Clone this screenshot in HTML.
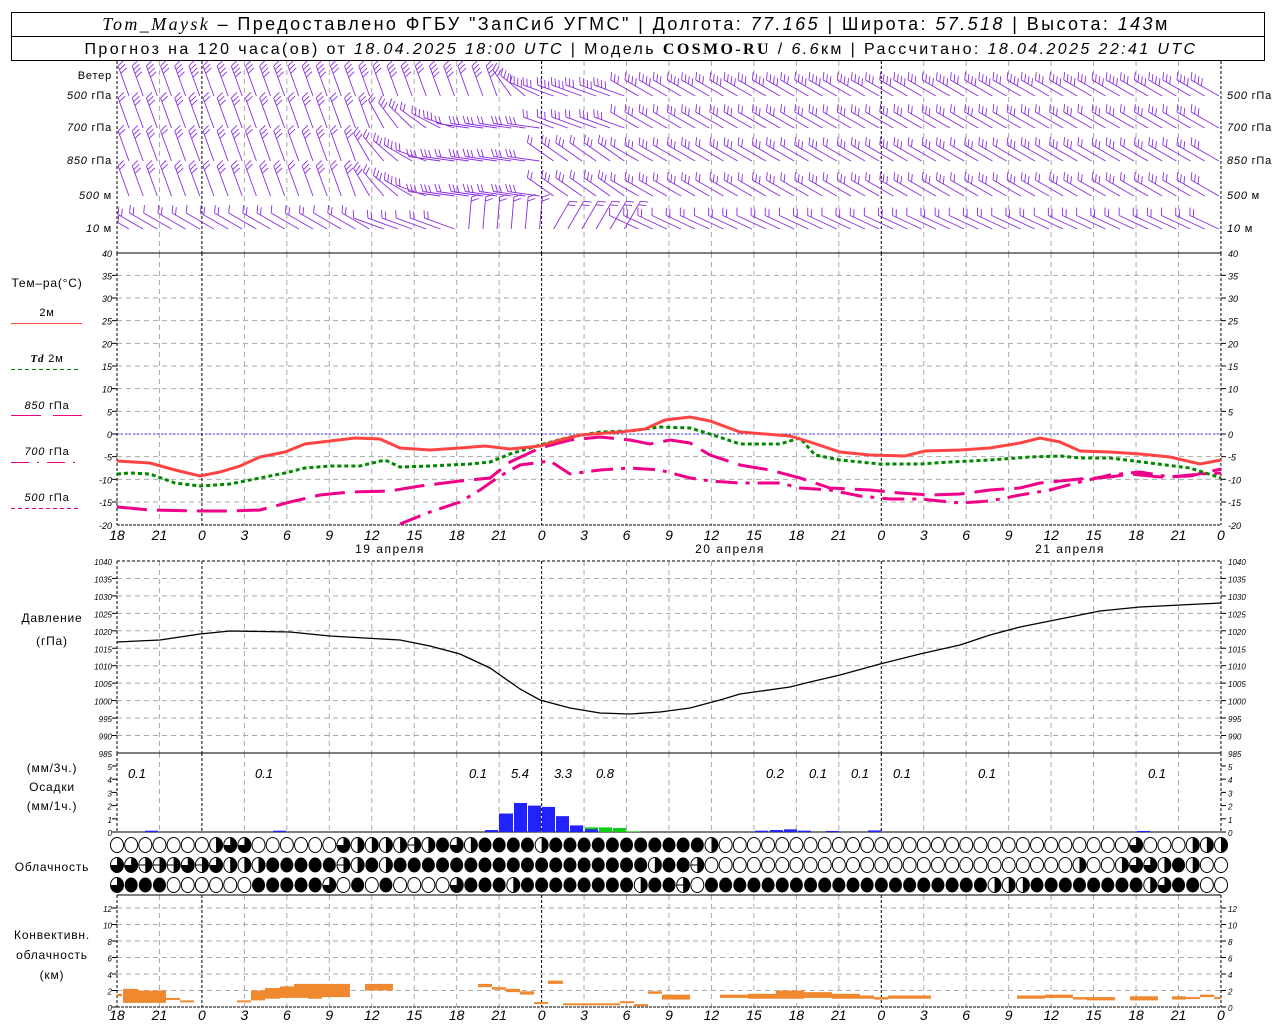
<!DOCTYPE html>
<html><head><meta charset="utf-8"><style>
body{margin:0;background:#fff;width:1280px;height:1024px;overflow:hidden}
svg{position:absolute;left:0;top:0}
text{font-family:"Liberation Sans",sans-serif;fill:#000}
.it{font-style:italic}
.lb{letter-spacing:0.8px}
</style></head><body>
<svg id="s" width="1280" height="1024" xmlns="http://www.w3.org/2000/svg">
<rect x="11.5" y="12.5" width="1253" height="48" fill="none" stroke="#000"/>
<line x1="11" y1="36.5" x2="1265" y2="36.5" stroke="#000"/>
<text x="636" y="30" font-size="18" text-anchor="middle" letter-spacing="2.4"><tspan font-family="Liberation Serif" font-style="italic">Tom_Maysk</tspan> – Предоставлено ФГБУ "ЗапСиб УГМС" | Долгота: <tspan font-style="italic">77.165</tspan> | Широта: <tspan font-style="italic">57.518</tspan> | Высота: <tspan font-style="italic">143</tspan>м</text>
<text x="641" y="54" font-size="16" text-anchor="middle" letter-spacing="2.4">Прогноз на 120 часа(ов) от <tspan font-style="italic">18.04.2025 18:00 UTC</tspan>  | Модель <tspan font-family="Liberation Serif" font-weight="bold">COSMO-RU</tspan> / <tspan font-style="italic">6.6</tspan>км | Рассчитано: <tspan font-style="italic">18.04.2025 22:41 UTC</tspan></text>
<g font-size="11" class="lb">
<text x="112" y="79" text-anchor="end">Ветер</text>
<text x="112" y="99" text-anchor="end"><tspan class="it">500</tspan> гПа</text>
<text x="112" y="131" text-anchor="end"><tspan class="it">700</tspan> гПа</text>
<text x="112" y="164" text-anchor="end"><tspan class="it">850</tspan> гПа</text>
<text x="112" y="199" text-anchor="end"><tspan class="it">500</tspan>  м</text>
<text x="112" y="232" text-anchor="end"><tspan class="it">10</tspan>   м</text>
<text x="1227" y="99"><tspan class="it">500</tspan> гПа</text>
<text x="1227" y="131"><tspan class="it">700</tspan> гПа</text>
<text x="1227" y="164"><tspan class="it">850</tspan> гПа</text>
<text x="1227" y="199"><tspan class="it">500</tspan>  м</text>
<text x="1227" y="232"><tspan class="it">10</tspan>   м</text>
<text x="47" y="287" text-anchor="middle" font-size="12">Тем–ра(°C)</text>
<text x="47" y="316" text-anchor="middle">2м</text>
<line x1="11" y1="323.5" x2="82" y2="323.5" stroke="#f44"/>
<text x="47" y="362" text-anchor="middle"><tspan font-family="Liberation Serif" font-style="italic" font-weight="bold">Td</tspan>  2м</text>
<line x1="11" y1="369.5" x2="80" y2="369.5" stroke="#080" stroke-dasharray="4,3"/>
<text x="47" y="409" text-anchor="middle"><tspan class="it">850</tspan> гПа</text>
<line x1="11" y1="415.5" x2="82" y2="415.5" stroke="#e08" stroke-dasharray="30,12"/>
<text x="47" y="455" text-anchor="middle"><tspan class="it">700</tspan> гПа</text>
<line x1="11" y1="462.5" x2="82" y2="462.5" stroke="#e08" stroke-dasharray="18,8,2,8"/>
<text x="47" y="501" text-anchor="middle"><tspan class="it">500</tspan> гПа</text>
<line x1="11" y1="508.5" x2="80" y2="508.5" stroke="#e08" stroke-dasharray="4,3"/>
<text x="52" y="622" text-anchor="middle" font-size="12">Давление</text>
<text x="52" y="645" text-anchor="middle" font-size="12">(гПа)</text>
<text x="52" y="772" text-anchor="middle" font-size="12">(мм/3ч.)</text>
<text x="52" y="791" text-anchor="middle" font-size="12">Осадки</text>
<text x="52" y="810" text-anchor="middle" font-size="12">(мм/1ч.)</text>
<text x="52" y="871" text-anchor="middle" font-size="12">Облачность</text>
<text x="52" y="939" text-anchor="middle" font-size="12">Конвективн.</text>
<text x="52" y="959" text-anchor="middle" font-size="12">облачность</text>
<text x="52" y="979" text-anchor="middle" font-size="12">(км)</text>
<text x="390" y="553" text-anchor="middle" font-size="12" letter-spacing="1.5">19 апреля</text>
<text x="730" y="553" text-anchor="middle" font-size="12" letter-spacing="1.5">20 апреля</text>
<text x="1070" y="553" text-anchor="middle" font-size="12" letter-spacing="1.5">21 апреля</text>
</g>
<g id="g"></g>
</svg>
<script>
var g=document.getElementById('g'),h='';
function L(a,b,c,d,st,ex){h+='<line x1="'+a+'" y1="'+b+'" x2="'+c+'" y2="'+d+'" stroke="'+st+'" '+(ex||'')+'/>';}
function T(x,y,s,a,fs,cl){h+='<text x="'+x+'" y="'+y+'" font-size="'+(fs||10)+'" text-anchor="'+(a||'start')+'" font-style="italic"'+(cl?' fill="'+cl+'"':'')+'>'+s+'</text>';}
function P(pts,st,w,da){h+='<polyline fill="none" stroke="'+st+'" stroke-width="'+w+'" '+(da?'stroke-dasharray="'+da+'"':'')+' points="'+pts+'"/>';}
var X0=117,X1=1221,px=14.154;
var panels=[[61,253],[253,525],[561,753],[753,832],[895,1007]];
for(var v=35;v>=-15;v-=5){var y=434-v*4.533;L(X0,y,X1,y,'#aaa','stroke-dasharray="5,4"');L(112,y,117,y,'#000');L(1221,y,1226,y,'#000');T(112,y+4,v,'end',9);T(1228,y+4,v,'start',9);}
T(112,257,40,'end',9);T(1228,257,40,'start',9);T(112,529,-20,'end',9);T(1228,529,-20,'start',9);
L(X0,434,X1,434,'#33f','stroke-dasharray="2,2"');
for(var p=1035;p>=990;p-=5){var y=561+(1040-p)*3.49;L(X0,y,X1,y,'#aaa','stroke-dasharray="5,4"');L(112,y,117,y,'#000');L(1221,y,1226,y,'#000');T(112,y+4,p,'end',8);T(1228,y+4,p,'start',8);}
T(112,565,1040,'end',8);T(1228,565,1040,'start',8);T(112,757,985,'end',8);T(1228,757,985,'start',8);
for(var k=0;k<=5;k++){var y=832-k*13.2;L(112,y,117,y,'#000');L(1221,y,1226,y,'#000');T(112,y+4,k,'end',8);T(1228,y+4,k,'start',8);}
for(var k=0;k<=12;k+=2){var y=1007-k*8.25;if(k>0)L(X0,y,X1,y,'#aaa','stroke-dasharray="5,4"');L(112,y,117,y,'#000');L(1221,y,1226,y,'#000');T(112,y+4,k,'end',8);T(1228,y+4,k,'start',8);}
var lab=[18,21,0,3,6,9,12,15,18,21,0,3,6,9,12,15,18,21,0,3,6,9,12,15,18,21,0];
for(var i=0;i<=26;i++){var x=X0+i*42.46;var day=(lab[i]==0||i==0||i==26);
 panels.forEach(function(p){L(x,p[0],x,p[1],day?'#000':'#aaa',day?'stroke-dasharray="3,2"':'stroke-dasharray="5,4"');});
 T(x,540,lab[i],'middle',14);T(x,1020,lab[i],'middle',14);}
L(X0,253,X1,253,'#000');L(X0,525,X1,525,'#000','stroke-dasharray="3,1"');L(X0,561,X1,561,'#000','stroke-dasharray="3,2"');
L(X0,753,X1,753,'#000');L(X0,832,X1,832,'#000');L(X0,895,X1,895,'#000');L(X0,1007,X1,1007,'#000','stroke-dasharray="3,1"');
P('117,642 160,640 200,634 230,631 290,632 330,636 400,640 430,646 460,654 490,668 520,689 540,700 570,708 600,713 630,714 660,712 690,708 720,700 740,694 790,687 810,682 840,675 880,664 920,654 960,645 990,635 1020,627 1060,619 1100,611 1140,607 1180,605 1221,603','#000',1.3);
P('117,507 150,510 200,511 230,511 260,510 290,502 320,495 350,492 390,491 420,486 460,481 490,478 510,462 540,448 570,440 600,437 630,440 650,444 670,440 690,443 710,455 740,465 770,470 800,478 830,488 870,490 900,493 930,495 960,494 990,490 1020,488 1040,483 1060,481 1080,479 1110,477 1130,474 1160,477 1190,476 1221,469','#e08',3,'30,10');
P('400,524 430,512 460,502 480,490 500,476 520,465 550,461 570,474 600,470 630,468 660,470 690,478 710,481 740,483 780,483 800,488 830,490 860,496 890,499 920,499 960,503 990,501 1020,495 1050,490 1080,482 1110,475 1140,472 1170,477 1200,474 1221,473','#e08',3,'22,8,4,8');
P('117,474 130,473 150,474 175,483 200,486 230,484 260,478 285,473 305,468 330,466 360,466 385,460 400,467 430,466 470,464 490,462 510,454 540,445 570,437 600,432 630,431 660,427 690,428 710,434 740,444 780,444 800,438 815,455 840,460 880,464 920,464 950,462 990,460 1030,457 1060,456 1080,458 1110,458 1150,463 1190,468 1221,478','#080',3,'4,3');
P('117,461 150,463 175,470 200,476 220,472 240,466 260,457 285,452 305,444 330,441 355,438 380,439 400,448 430,450 460,448 485,446 510,449 540,446 560,440 580,435 620,432 645,429 665,420 690,417 710,421 740,432 790,436 810,442 840,452 870,455 905,456 925,451 960,450 990,448 1020,443 1040,438 1060,442 1080,451 1110,452 1140,454 1170,457 1200,464 1221,460','#f44',3);
function bar(x,w,v,c){var y=832-v*13.2;h+='<rect x="'+x+'" y="'+y+'" width="'+w+'" height="'+(832-y)+'" fill="'+c+'"/>';}
bar(145,13,0.1,'#22f');bar(273,13,0.1,'#22f');bar(485,13,0.15,'#22f');bar(499,14,1.4,'#22f');bar(514,13,2.2,'#22f');bar(528,13,2.0,'#22f');bar(542,13,1.9,'#22f');bar(556,13,1.2,'#22f');bar(570,13,0.5,'#22f');
bar(585,13,0.35,'#1c1');bar(585,13,0.2,'#22f');bar(599,13,0.35,'#1c1');bar(613,13,0.3,'#1c1');bar(627,13,0.05,'#1c1');
bar(755,13,0.1,'#22f');bar(770,13,0.15,'#22f');bar(784,13,0.2,'#22f');bar(798,13,0.1,'#22f');bar(826,13,0.08,'#22f');bar(868,13,0.12,'#22f');bar(1137,13,0.08,'#22f');
[[137,'0.1'],[264,'0.1'],[478,'0.1'],[520,'5.4'],[563,'3.3'],[605,'0.8'],[775,'0.2'],[818,'0.1'],[860,'0.1'],[902,'0.1'],[987,'0.1'],[1157,'0.1']].forEach(function(a){T(a[0],778,a[1],'middle',13);});
var rows=['OOOOOOOhqqOOOOOOqhhhhehFqhFFFFhFFFFFFFFFFFhOOOOOOOOOOOOOOOOOOOOOOOOOOOOOqOOOhhh',
'qqeeeqeqhhhFFFFFehFhFFFFFFFFFFFFFFFFFFhFFeOOOOOOOOOOOOOOOOOOOOOOOOOOhOOhqqhFh',
'qFFFOOOOOOFFFFFqOFOFOOOOqFFFhFFFFFFFFhFFeOFFFFFFFFFFFFFFFFFFFFhhhFFFFFFFFhqFF'];
rows.forEach(function(r,ri){var cy=845+ri*20;for(var i=0;i<79;i++){var c=r[i]||'O',cx=117+i*14.154;
 var el='<ellipse cx="'+cx+'" cy="'+cy+'" rx="6.5" ry="7.5" ';
 if(c=='F')h+=el+'fill="#000"/>';
 else{h+=el+'fill="#fff" stroke="#000"/>';
  if(c=='h')h+='<path d="M'+cx+' '+(cy-7.5)+'A6.5 7.5 0 0 1 '+cx+' '+(cy+7.5)+'Z"/>';
  if(c=='q')h+='<path d="M'+cx+' '+(cy-7.5)+'A6.5 7.5 0 1 1 '+(cx-6.5)+' '+cy+'L'+cx+' '+cy+'Z"/>';
  if(c=='e'){h+='<path d="M'+cx+' '+(cy-7.5)+'A6.5 7.5 0 0 1 '+cx+' '+(cy+7.5)+'Z"/>';L(cx-6.5,cy,cx+6.5,cy,'#000');}
 }}});
function cb(x1,x2,a,b){var y1=1007-b*8.25,y2=1007-a*8.25;h+='<rect x="'+x1+'" y="'+y1+'" width="'+(x2-x1)+'" height="'+Math.max(2,y2-y1)+'" fill="#f08830"/>';}
[[117,122,1.3,1.6],[123,138,0.5,2.2],[138,166,0.5,2],[166,180,0.9,1.1],[180,194,0.6,0.8],[237,251,0.6,0.8],[251,265,0.8,2],[265,280,1,2.3],[280,294,1.1,2.5],[294,308,1.1,2.8],[308,322,1,2.8],[322,350,1.2,2.8],[365,393,2,2.8],
[478,492,2.4,2.8],[492,506,2.1,2.4],[506,520,1.8,2.2],[520,534,1.5,1.9],[534,548,0.4,0.6],[548,563,2.8,3.2],[563,620,0.35,0.45],[620,634,0.5,0.7],[634,648,0.25,0.35],[648,662,1.6,1.9],[662,690,0.9,1.5],
[720,748,1.1,1.5],[748,776,1,1.6],[776,804,1,2],[804,832,1.1,1.8],[832,860,1,1.6],[860,874,1,1.4],[874,888,0.9,1.2],[888,931,1,1.4],[1017,1045,1,1.4],[1045,1073,1.1,1.5],[1073,1087,0.9,1.2],[1087,1115,0.8,1.2],[1130,1158,0.8,1.3],[1172,1186,0.9,1.3],[1186,1200,1,1.2],[1200,1214,1.2,1.5],[1214,1221,1,1.2]].forEach(function(a){cb(a[0],a[1],a[2],a[3]);});
var lv=[[96,4],[128,3],[161,3],[196,3],[229,2]];
function ang(l,t){
 if(l==4){if(t<18)return -150;if(t<24)return -160;if(t<30)return -85;if(t<36)return -60;return -155;}
 var t1=[26,17,16,16][l],t2=[30,24,22,22][l];
 if(t<t1)return -110; if(t<t2)return -110-(t-t1)/(t2-t1)*60; if(t<30)return -172; if(t<36)return -160+ (l>1? 15:0); return -150;}
var wb='';
for(var l=0;l<5;l++){for(var t=0;t<78;t++){
 var a=ang(l,t)*Math.PI/180,dx=Math.cos(a),dy=Math.sin(a),len=32;
 var x=117+t*14.154+12,y=lv[l][0];
 var tx=x+dx*len,ty=y+dy*len;
 if(tx<118){var s=(x-118)/(-dx);tx=x+dx*s;ty=y+dy*s;}
 wb+='M'+x.toFixed(1)+' '+y+'L'+tx.toFixed(1)+' '+ty.toFixed(1);
 var fx=-dy*0.9+dx*0.4,fy=dx*0.9+dy*0.4,n=lv[l][1]-((t*7+l*3)%3==0?1:0);
 if(l==4&&t>=24&&t<36)n=2;
 for(var k=0;k<n;k++){var bx=tx-dx*k*4,by=ty-dy*k*4;wb+='M'+bx.toFixed(1)+' '+by.toFixed(1)+'l'+(fx*8).toFixed(1)+' '+(fy*8).toFixed(1);}
}}
h+='<path d="'+wb+'" stroke="#8a2be2" stroke-width="0.9" fill="none"/>';
g.innerHTML=h;
</script>
</body></html>
